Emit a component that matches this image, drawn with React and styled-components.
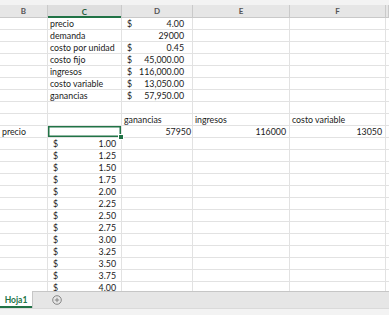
import styled, { createGlobalStyle } from "styled-components";

const GlobalStyle = createGlobalStyle`
  html, body {
    margin: 0;
    padding: 0;
    background: #ffffff;
  }
  body {
    font-family: Lato, "Liberation Sans", sans-serif;
  }
`;

const columns = "48px 74px 71px 97px 96px 1fr";
const letters = ["B", "C", "D", "E", "F", ""];

const Sheet = styled.div`
  width: 389px;
  height: 315px;
  display: flex;
  flex-direction: column;
  overflow: hidden;
  background: #ffffff;
`;

const TopStrip = styled.div`
  height: 5px;
  background: #f3f3f3;
`;

const HeaderRow = styled.div`
  display: grid;
  grid-template-columns: ${columns};
  height: 13px;
  background: #e6e6e6;
  border-bottom: 1px solid #c9c9c9;
  box-sizing: border-box;
`;

const HeaderCell = styled.div`
  display: flex;
  align-items: center;
  justify-content: center;
  font-size: 8px;
  font-weight: 700;
  color: ${(p) => (p.$active ? "#1f5c3a" : "#555555")};
  background: ${(p) => (p.$active ? "#dedede" : "transparent")};
  border-right: 1px solid #cacaca;
  box-shadow: ${(p) => (p.$active ? "inset 0 -2px 0 #217346" : "none")};
  margin-bottom: ${(p) => (p.$active ? "-1px" : "0")};
`;

const Grid = styled.div`
  flex: 1;
  display: grid;
  grid-template-columns: ${columns};
  grid-auto-rows: 12px;
  overflow: hidden;
`;

const Cell = styled.div`
  position: relative;
  box-sizing: border-box;
  border-right: 1px solid #e2e2e2;
  border-bottom: 1px solid #e2e2e2;
  display: flex;
  align-items: center;
  justify-content: ${(p) => (p.$align === "right" ? "flex-end" : "flex-start")};
  padding: 0 ${(p) => p.$padRight ?? 2}px 0 2px;
  font-size: 8.8px;
  line-height: 11px;
  color: #1a1a1a;
  white-space: nowrap;
  box-shadow: ${(p) => (p.$selected ? "inset 0 0 0 1.5px #217346" : "none")};

  ${(p) =>
    p.$selected &&
    `
    &::after {
      content: "";
      position: absolute;
      right: -3px;
      bottom: -3px;
      width: 4px;
      height: 4px;
      background: #217346;
      border: 1px solid #ffffff;
      z-index: 2;
    }
  `}
`;

const Dollar = styled.span`
  margin-left: 3px;
`;

const Amount = styled.span`
  margin-left: auto;
`;

const TabBar = styled.div`
  height: 17px;
  display: flex;
  align-items: stretch;
  background: #e6e6e6;
  border-top: 1px solid #c6c6c6;
  box-sizing: border-box;
`;

const Tab = styled.div`
  width: 33px;
  background: #ffffff;
  border-right: 1px solid #c6c6c6;
  box-sizing: border-box;
  display: flex;
  align-items: center;
  justify-content: center;
  font-size: 8.5px;
  font-weight: 700;
  color: #217346;
  box-shadow: inset 0 -2px 0 #217346;
  margin-top: -1px;
`;

const AddButton = styled.div`
  width: 10px;
  margin-left: 19px;
  display: flex;
  align-items: center;
  color: #7a7a7a;
`;

const StatusBar = styled.div`
  height: 6px;
  background: #f3f3f3;
  border-top: 1px solid #dadada;
`;

const txt = (v) => ({ type: "text", v });
const num = (v, pad) => ({ type: "num", v, pad });
const cur = (v, pad) => ({ type: "cur", v, pad });
const empty = { type: "text", v: "" };

const topBlock = [
  ["precio", cur("4.00", 8)],
  ["demanda", num("29000", 8)],
  ["costo por unidad", cur("0.45", 8)],
  ["costo fijo", cur("45,000.00", 8)],
  ["ingresos", cur("116,000.00", 8)],
  ["costo variable", cur("13,050.00", 8)],
  ["ganancias", cur("57,950.00", 8)],
].map(([label, d]) => [empty, txt(label), d, empty, empty, empty]);

const prices = [];
for (let p = 1; p <= 4.001; p += 0.25) {
  prices.push([empty, cur(p.toFixed(2), 5), empty, empty, empty, empty]);
}

const rows = [
  ...topBlock,
  [empty, empty, empty, empty, empty, empty],
  [empty, empty, txt("ganancias"), txt("ingresos"), txt("costo variable"), empty],
  [txt("precio"), { type: "text", v: "", selected: true }, num("57950", 1), num("116000", 3), num("13050", 3), empty],
  ...prices,
];

const renderCell = (c, key) => {
  if (c.type === "cur") {
    return (
      <Cell key={key} $padRight={c.pad}>
        <Dollar>$</Dollar>
        <Amount>{c.v}</Amount>
      </Cell>
    );
  }
  if (c.type === "num") {
    return (
      <Cell key={key} $align="right" $padRight={c.pad}>
        {c.v}
      </Cell>
    );
  }
  return (
    <Cell key={key} $selected={c.selected}>
      {c.v}
    </Cell>
  );
};

export default function App() {
  return (
    <>
      <GlobalStyle />
      <Sheet>
        <TopStrip />
        <HeaderRow>
          {letters.map((l) => (
            <HeaderCell key={l || "end"} $active={l === "C"}>
              {l}
            </HeaderCell>
          ))}
        </HeaderRow>
        <Grid>{rows.map((r, i) => r.map((c, j) => renderCell(c, `${i}-${j}`)))}</Grid>
        <TabBar>
          <Tab>Hoja1</Tab>
          <AddButton>
            <svg width="10" height="10" viewBox="0 0 10 10">
              <circle cx="5" cy="5" r="4.3" fill="none" stroke="currentColor" strokeWidth="0.9" />
              <path d="M5 2.8v4.4M2.8 5h4.4" stroke="currentColor" strokeWidth="0.9" />
            </svg>
          </AddButton>
        </TabBar>
        <StatusBar />
      </Sheet>
    </>
  );
}
